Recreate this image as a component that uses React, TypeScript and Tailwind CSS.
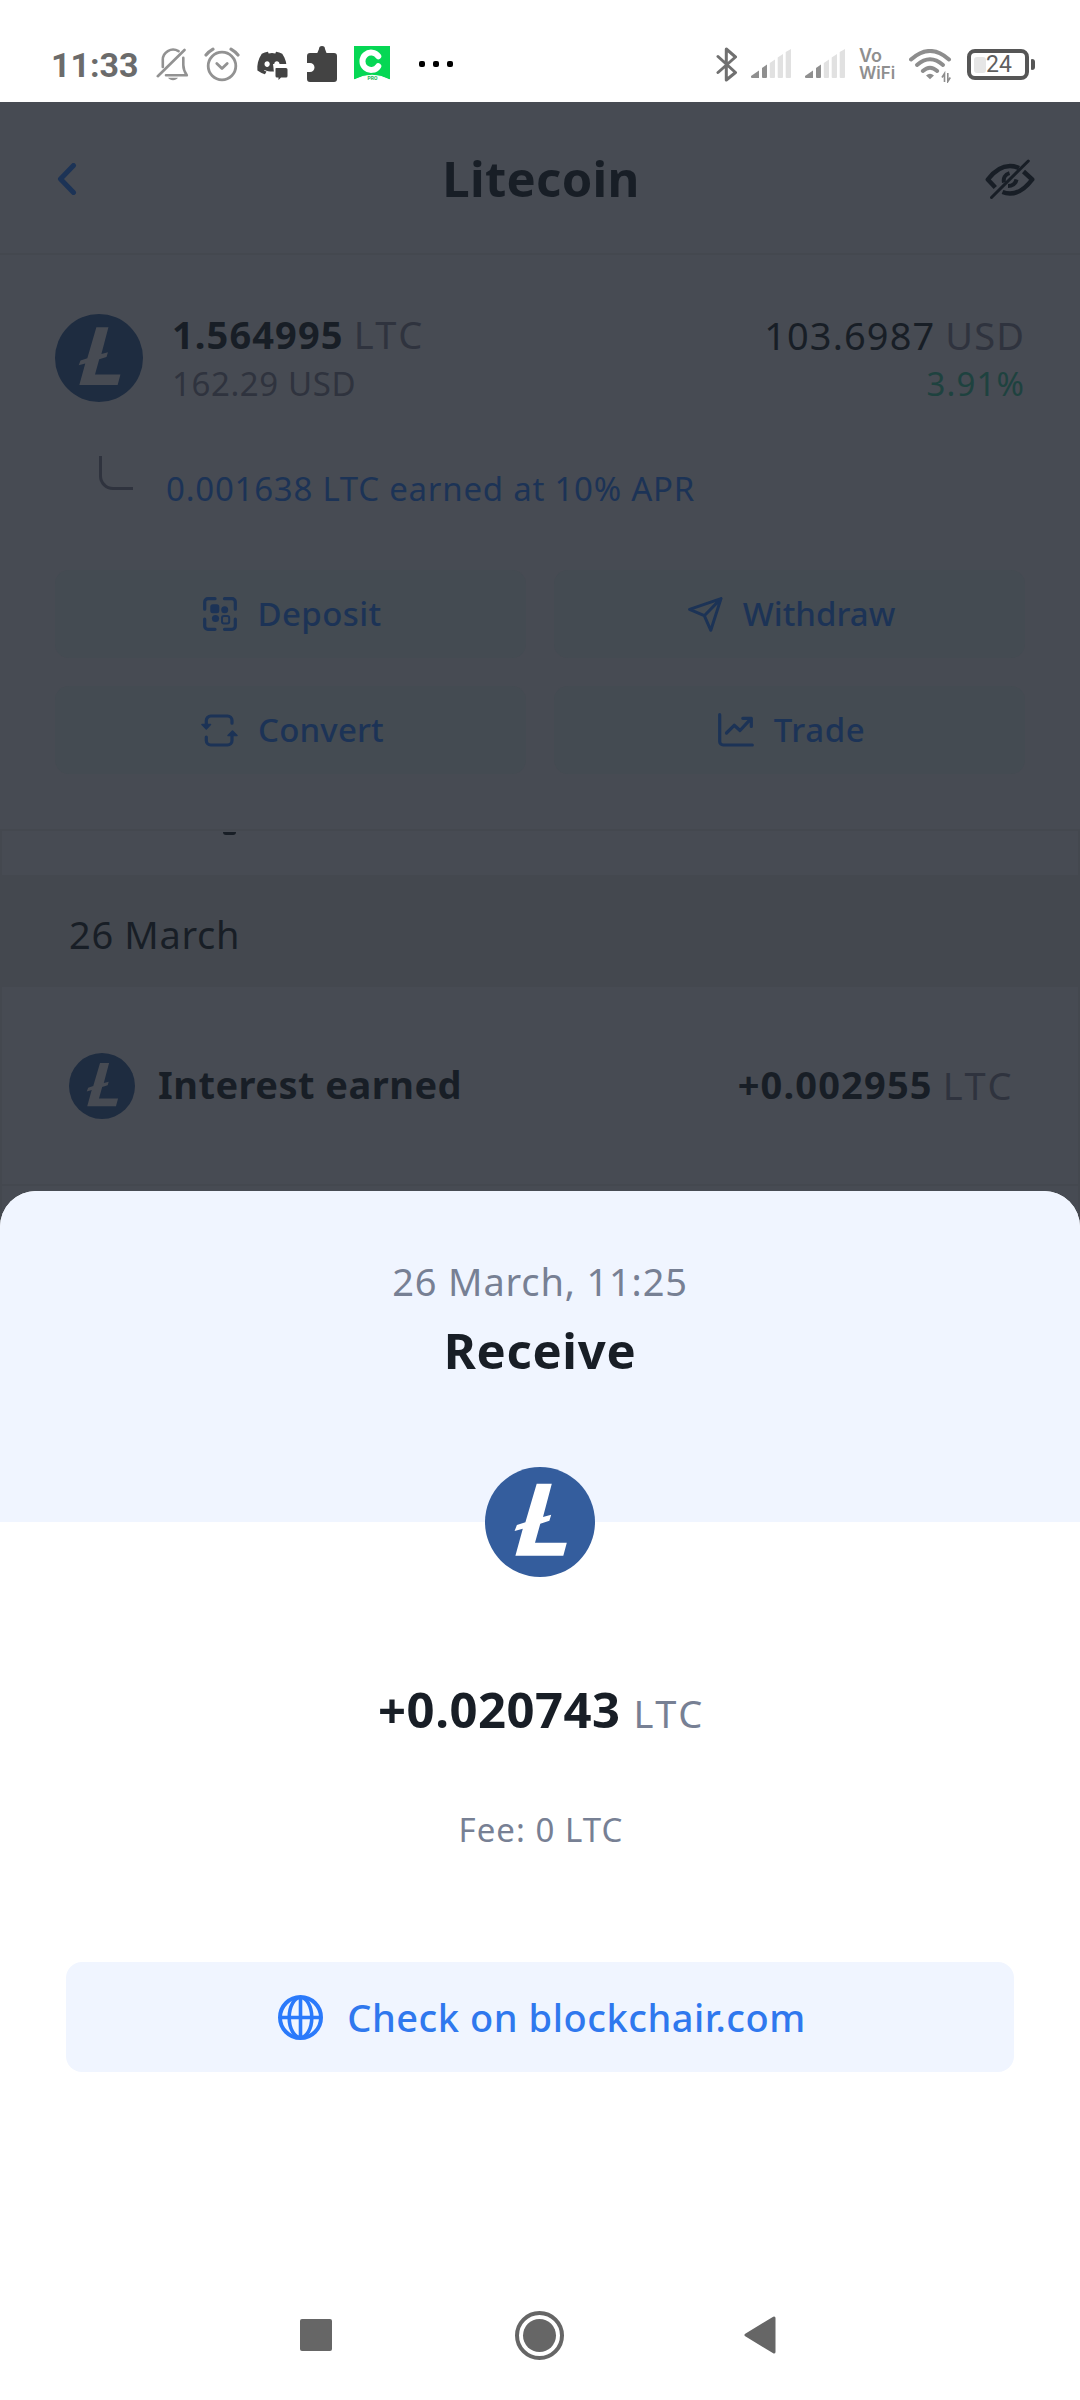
import type { ReactNode } from 'react'
import { FaDiscord } from 'react-icons/fa'

interface LitecoinLogoProps {
  size: number
  circle: string
  letter: string
}

const LitecoinLogo = ({ size, circle, letter }: LitecoinLogoProps) => (
  <svg width={size} height={size} viewBox="0 0 110 110" className="shrink-0">
    <circle cx="55" cy="55" r="55" fill={circle} />
    <path
      d="M51.7 16.7H66.8L58 50L66.2 47.8L64.4 53.8L55.3 56.7L50 75.7H81.8L78.3 88.7H30.4L37.8 61.8L29.6 64L31.9 58L40.4 55.2Z"
      fill={letter}
    />
  </svg>
)

const BellOffIcon = () => (
  <svg width="33" height="33" viewBox="0 0 33 33" fill="none" stroke="#929292" strokeWidth="2.6" strokeLinecap="round">
    <path d="M1.8 28.2L28.5 2" />
    <path d="M6.8 19V12.5A10.3 10.3 0 0 1 22.5 3.2" />
    <path d="M27.3 9.8V17C27.3 21 28.6 24 30.8 27.3H10" strokeLinejoin="round" />
    <path d="M12 29.8H22C20 33 14 33 12 29.8Z" fill="#929292" stroke="none" />
  </svg>
)

const AlarmIcon = () => (
  <svg width="36" height="35" viewBox="0 0 36 35" fill="none" stroke="#929292" strokeWidth="2.8" strokeLinecap="round">
    <circle cx="18" cy="19" r="13.8" />
    <path d="M12.8 16.5L18 21.5L23.2 16.5" strokeLinejoin="round" />
    <path d="M2 8Q5 4.5 9 2.2M34 8Q31 4.5 27 2.2" strokeWidth="3.2" />
  </svg>
)

const PuzzleIcon = () => (
  <svg width="30" height="36" viewBox="0 0 30 36" fill="#434343">
    <path d="M3 7H10.3L12 3A3 3 0 0 1 18 3L19.5 7H27A3 3 0 0 1 30 10V33A3 3 0 0 1 27 36H3A3 3 0 0 1 0 33V26H3A4.5 4.5 0 0 0 3 17H0V10A3 3 0 0 1 3 7Z" />
  </svg>
)

const GreenAppIcon = () => (
  <svg width="36" height="34" viewBox="0 0 36 34">
    <path d="M0 0H36V34H0Z" fill="#06d754" />
    <path d="M24.3 10.3A8.7 8.7 0 1 0 24.3 20.2" fill="none" stroke="#fff" strokeWidth="6" strokeLinecap="round" />
    <path d="M0 34Q18 24.5 36 34Z" fill="#fff" stroke="#fff" />
    <text x="18.5" y="34" textAnchor="middle" fontSize="5" fontWeight="700" fontFamily="Roboto, sans-serif" fill="#18b552">
      PRO
    </text>
  </svg>
)

const BluetoothIcon = () => (
  <svg width="22" height="35" viewBox="0 0 22 35" fill="none" stroke="#707070" strokeWidth="3" strokeLinecap="round" strokeLinejoin="round">
    <path d="M2 9.5L19.5 25.5L10.3 33V2L19.5 10L2 25.5" />
  </svg>
)

const SignalIcon = () => (
  <svg width="40" height="29" viewBox="0 0 40 29">
    <g fill="#8f8f8f">
      <path d="M0 27L8 21.5V29H1A1 1 0 0 1 0 28Z" />
      <path d="M11 19L16 15.5V28A1 1 0 0 1 15 29H12A1 1 0 0 1 11 28Z" />
    </g>
    <g fill="#e1e1e1">
      <path d="M18.8 14L24 10.5V28A1 1 0 0 1 23 29H19.8A1 1 0 0 1 18.8 28Z" />
      <path d="M26.7 8.5L32 5V28A1 1 0 0 1 31 29H27.7A1 1 0 0 1 26.7 28Z" />
      <path d="M34.7 3L40 0V28A1 1 0 0 1 39 29H35.7A1 1 0 0 1 34.7 28Z" />
    </g>
  </svg>
)

const WifiIcon = () => (
  <svg width="43" height="34" viewBox="0 0 43 34" fill="none" stroke="#8d8d8d" strokeWidth="4" strokeLinecap="round">
    <path d="M2 10.5Q21 -6.5 40 10.5" />
    <path d="M8 16Q21 4.5 34 16" />
    <path d="M13.8 22Q21 15.5 28.2 22" />
    <path d="M17 26.5Q21 22.8 25 26.5L21 30.3Z" fill="#8d8d8d" stroke="none" />
    <path d="M35.5 33V24.500L33 28.500M38.800 24V32.500L41.300 28.500" strokeWidth="1.6" strokeLinecap="butt" />
  </svg>
)

const BatteryIcon = () => (
  <div className="flex items-center gap-[2px]">
    <div className="flex h-[31px] w-[62px] items-center rounded-[8px] border-4 border-[#565656] pl-[3px]">
      <div className="h-[16px] w-[12px] shrink-0 rounded-[3px] bg-[#e6e6e6]" />
      <span className="mt-px font-['Roboto',sans-serif] text-[23px] leading-[24px] text-[#5f5f5f]">24</span>
    </div>
    <div className="h-[11px] w-[4px] rounded-r-[3px] rounded-l-[1px] bg-[#565656]" />
  </div>
)

const StatusBar = () => (
  <div className="flex h-[102px] items-start justify-between bg-white pr-[45px] pl-[51px]">
    <div className="flex items-start">
      <span className="mt-[45px] w-[88px] font-['Roboto',sans-serif] text-[34px] leading-[40px] font-bold text-[#6b6b6b]">
        11:33
      </span>
      <div className="mt-[48px] ml-[17px]">
        <BellOffIcon />
      </div>
      <div className="mt-[47px] ml-[15px]">
        <AlarmIcon />
      </div>
      <div className="relative mt-[50px] ml-[16px]">
        <FaDiscord className="h-[26px] w-[32px] text-[#434343]" />
        <svg width="15" height="17" viewBox="0 0 15 17" className="absolute top-[14px] left-[17px]">
          <path d="M0 0H15V17H2Z" fill="#fff" />
          <path d="M3 4H13A1.5 1.5 0 0 1 14.5 5.5V12A1.5 1.5 0 0 1 13 13.5H8L5.5 16V13.5H4A1.5 1.5 0 0 1 2.5 12V4.5Z" fill="#434343" />
        </svg>
      </div>
      <div className="mt-[46px] ml-[19px]">
        <PuzzleIcon />
      </div>
      <div className="mt-[46px] ml-[17px]">
        <GreenAppIcon />
      </div>
      <div className="mt-[61px] ml-[29px] flex gap-[8px]">
        <span className="size-[6px] rounded-[2px] bg-black" />
        <span className="size-[6px] rounded-[2px] bg-black" />
        <span className="size-[6px] rounded-[2px] bg-black" />
      </div>
    </div>
    <div className="flex items-start">
      <div className="mt-[47px]">
        <BluetoothIcon />
      </div>
      <div className="mt-[49px] ml-[13px]">
        <SignalIcon />
      </div>
      <div className="mt-[49px] ml-[14px]">
        <SignalIcon />
      </div>
      <div className="mt-[47px] ml-[14px] w-[37px] font-['Inter',sans-serif] text-[17px] leading-[17px] font-semibold text-[#8f8f8f]">
        <div className="text-[18px]">Vo</div>
        <div className="mt-px">WiFi</div>
      </div>
      <div className="mt-[49px] ml-[13px]">
        <WifiIcon />
      </div>
      <div className="mt-[49px] ml-[15px]">
        <BatteryIcon />
      </div>
    </div>
  </div>
)

const Header = () => (
  <div className="flex h-[153px] items-center justify-between border-b-2 border-[#44484f] pr-[43px] pl-[57px]">
    <svg width="20" height="32" viewBox="0 0 20 32" fill="none" stroke="#1c3356" strokeWidth="5" strokeLinecap="round" strokeLinejoin="round" className="mt-[3px] mr-[20px]">
      <path d="M16.5 2.5L3.5 16L16.5 29.5" />
    </svg>
    <h1 className="text-[49px] leading-[60px] font-bold tracking-[0.3px] text-[#181e26]">Litecoin</h1>
    <svg width="52" height="42" viewBox="0 0 52 42" fill="none" stroke="#181e26" strokeWidth="4.5" strokeLinejoin="round" className="mt-[3px]">
      <path d="M10.3 29.5L2.8 21.5C10 12 17 8 25 8C28.5 8 31.5 8.8 34 10" />
      <path d="M38.5 13.5L47.2 21.5C40 31 32.5 35.5 25 35.5C22 35.5 19.8 35 17.5 34" />
      <path d="M24.5 15.2C20 16.5 18 20 19 24.5M31.5 21.5C30.5 26 27.5 28 23 28" strokeWidth="4" />
      <path d="M43.3 3L6.5 39.5" strokeWidth="3" strokeLinecap="round" />
    </svg>
  </div>
)

const DepositIcon = () => (
  <svg width="34" height="34" viewBox="0 0 34 34" fill="none" stroke="#1c3356" strokeWidth="3.2" strokeLinecap="round">
    <path d="M1.7 12.2V5A3.3 3.3 0 0 1 5 1.7H12M21.5 1.7H29A3.3 3.3 0 0 1 32.3 5V12.2M32.3 22V29A3.3 3.3 0 0 1 29 32.3H21.5M12 32.3H5A3.3 3.3 0 0 1 1.7 29V22" />
    <g fill="#1c3356" stroke="none">
      <rect x="7.3" y="7.3" width="9" height="9" rx="2.5" />
      <circle cx="21.7" cy="12.8" r="3.5" />
      <circle cx="12.5" cy="21.5" r="3.6" />
    </g>
    <rect x="19" y="19" width="7.2" height="7.6" rx="2" strokeWidth="2" />
  </svg>
)

const WithdrawIcon = () => (
  <svg width="35" height="35" viewBox="0 0 35 35" fill="none" stroke="#1c3356" strokeWidth="3" strokeLinejoin="round" strokeLinecap="round">
    <path d="M1.6 12.3L33 1.6L22.8 33.3L16.3 18.7ZM16.3 18.7L33 1.6" />
  </svg>
)

const ConvertIcon = () => (
  <svg width="37" height="33" viewBox="0 0 37 33" fill="none" stroke="#1c3356" strokeWidth="3.2" strokeLinecap="round">
    <path d="M5.3 10V6.5A4.5 4.5 0 0 1 9.8 2H26.5A4.5 4.5 0 0 1 31 6.5V9.2" />
    <path d="M5.3 23V26.5A4.5 4.5 0 0 0 9.8 31H26.5A4.5 4.5 0 0 0 31 26.5V22" />
    <g fill="#1c3356" strokeWidth="1.5" strokeLinejoin="round">
      <path d="M1 10.5H9.5L5.3 15Z" />
      <path d="M27 21.5H36L31.5 17Z" />
    </g>
  </svg>
)

const TradeIcon = () => (
  <svg width="36" height="34" viewBox="0 0 36 34" fill="none" stroke="#1c3356" strokeWidth="3.2" strokeLinecap="round" strokeLinejoin="round">
    <path d="M1.7 1.7V28.5A3.5 3.5 0 0 0 5.2 32H34.3" />
    <path d="M8.5 20L16.2 12.3L22 17.5L32.8 5.8M24.8 5.3H33.3V13.5" />
  </svg>
)

interface ActionButtonProps {
  icon: ReactNode
  children: ReactNode
}

const ActionButton = ({ icon, children }: ActionButtonProps) => (
  <button className="flex h-[88px] items-center justify-center gap-5 rounded-[14px] bg-[#444b52] pl-[4px] text-[33px] leading-[44px] font-medium text-[#1c3356]">
    {icon}
    {children}
  </button>
)

const AccountSection = () => (
  <section className="h-[576px] border-b-2 border-[#44484f] px-[55px] pt-[56px]">
    <div className="flex items-start">
      <div className="mt-[3px]">
        <LitecoinLogo size={88} circle="#1e2c40" letter="#474b53" />
      </div>
      <div className="ml-[29px]">
        <div className="flex gap-[10px] text-[38px] leading-[46px]">
          <span className="font-bold tracking-[1.1px] text-[#181e26]">1.564995</span>
          <span className="tracking-[2.5px] text-[#2f333e]">LTC</span>
        </div>
        <div className="mt-[5px] text-[33px] leading-[44px] tracking-[0.6px] text-[#2f333e]">162.29 USD</div>
      </div>
      <div className="ml-auto text-right">
        <div className="mt-px flex gap-[10px] text-[38px] leading-[46px] tracking-[1.1px]">
          <span className="text-[#181e26]">103.6987</span>
          <span className="text-[#2f333e]">USD</span>
        </div>
        <div className="mt-1 text-[33px] leading-[44px] tracking-[1.1px] text-[#1e423f]">3.91%</div>
      </div>
    </div>
    <div className="mt-[50px] flex items-start pl-[44px]">
      <div className="h-[34px] w-[34px] rounded-bl-[14px] border-b-3 border-l-3 border-[#2f333e]" />
      <span className="mt-[11px] ml-[33px] text-[33px] leading-[44px] tracking-[0.76px] text-[#1c3356]">
        0.001638 LTC earned at 10% APR
      </span>
    </div>
    <div className="mt-[59px] grid grid-cols-2 gap-[28px]">
      <ActionButton icon={<DepositIcon />}>
        <span className="tracking-[0.39px]">Deposit</span>
      </ActionButton>
      <ActionButton icon={<WithdrawIcon />}>
        <span>Withdraw</span>
      </ActionButton>
      <ActionButton icon={<ConvertIcon />}>
        <span className="tracking-[0.15px]">Convert</span>
      </ActionButton>
      <ActionButton icon={<TradeIcon />}>
        <span className="tracking-[0.62px]">Trade</span>
      </ActionButton>
    </div>
  </section>
)

const History = () => (
  <section className="grow border-x-2 border-[#44484f]">
    {/* tail of the row scrolled under the account block */}
    <div className="h-[44px] pt-px pl-[221px]">
      <div className="h-[3px] w-[13px] rounded-b-[6px] bg-[#181e26]" />
    </div>
    <div className="flex h-[112px] items-center bg-[#44484f] pt-[6px] pl-[67px] text-[38px] leading-[46px] tracking-[0.67px] text-[#181e26]">
      26 March
    </div>
    <div className="flex h-[199px] items-center border-b-2 border-[#44484f] pr-[64px] pl-[67px] text-[38px] leading-[46px]">
      <LitecoinLogo size={66} circle="#1e2c40" letter="#474b53" />
      <span className="mb-[3px] ml-[23px] font-bold tracking-[0.48px] text-[#181e26]">Interest earned</span>
      <span className="mb-[3px] ml-auto font-bold tracking-[1.15px] text-[#181e26]">+0.002955</span>
      <span className="mb-[2px] ml-[10px] tracking-[2.6px] text-[#2f333e]">LTC</span>
    </div>
  </section>
)

const GlobeIcon = () => (
  <svg width="45" height="45" viewBox="0 0 45 45" fill="none" stroke="#2b7afb" strokeWidth="3.6">
    <circle cx="22.5" cy="22.5" r="20.5" strokeWidth="4" />
    <ellipse cx="22.5" cy="22.5" rx="11.3" ry="20" />
    <path d="M22.5 2V43M2 22.5H43" />
  </svg>
)

const ReceiveSheet = () => (
  <div className="absolute inset-x-0 top-[1191px] bottom-0 flex flex-col overflow-hidden rounded-t-[36px] bg-white">
    <div className="relative flex h-[331px] flex-col items-center bg-[#f0f5ff] pt-[67px]">
      <div className="text-[38px] leading-[46px] tracking-[0.84px] text-[#778094]">26 March, 11:25</div>
      <h2 className="mt-4 text-[49px] leading-[60px] font-bold tracking-[0.7px] text-[#181e26]">Receive</h2>
      <div className="absolute -bottom-[55px]">
        <LitecoinLogo size={110} circle="#345d9d" letter="#ffffff" />
      </div>
    </div>
    <div className="flex flex-col items-center px-[66px] pt-[157px]">
      <div className="flex h-[60px] items-baseline gap-[13px] pl-[3px] leading-[60px]">
        <span className="text-[49px] font-bold tracking-[0.5px] text-[#181e26]">+0.020743</span>
        <span className="text-[38px] tracking-[2.6px] text-[#778094]">LTC</span>
      </div>
      <div className="mt-[69px] pl-[2px] text-[33px] leading-[44px] tracking-[1.05px] text-[#778094]">Fee: 0 LTC</div>
      <button className="mt-[110px] flex h-[110px] w-full items-center justify-center gap-6 rounded-[16px] bg-[#f0f5ff] pl-[4px] text-[38px] leading-[46px] font-medium tracking-[0.54px] text-[#2f78ee]">
        <GlobeIcon />
        Check on blockchair.com
      </button>
    </div>
    <nav className="mt-auto flex h-[130px] items-center pl-[300px]">
      <div className="size-[32px] rounded-[2px] bg-[#666666]" />
      <div className="ml-[183px] flex size-[49px] items-center justify-center rounded-full border-4 border-[#666666]">
        <div className="size-[33px] rounded-full bg-[#666666]" />
      </div>
      <svg width="32" height="38" viewBox="0 0 32 38" fill="#666666" stroke="#666666" strokeWidth="3" strokeLinejoin="round" className="ml-[180px]">
        <path d="M2 19L30 2V36Z" />
      </svg>
    </nav>
  </div>
)

export default function App() {
  return (
    <div className="relative flex h-[2400px] w-[1080px] flex-col overflow-hidden bg-[#474b53] font-['Noto_Sans',sans-serif] whitespace-nowrap">
      <StatusBar />
      <Header />
      <AccountSection />
      <History />
      <ReceiveSheet />
    </div>
  )
}
